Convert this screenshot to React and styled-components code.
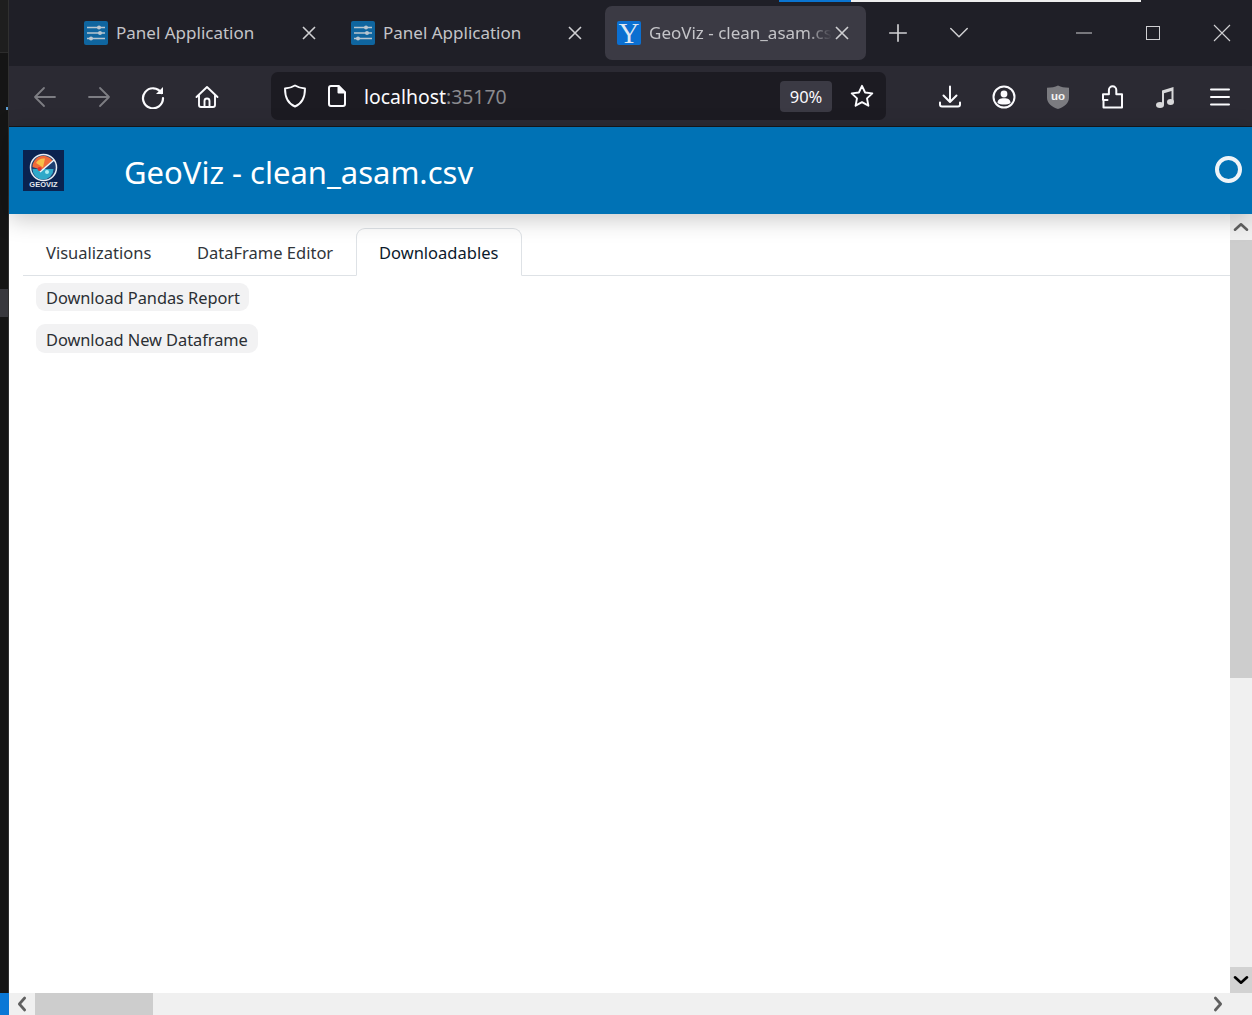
import React from 'react';
import styled, { createGlobalStyle } from 'styled-components';

const GlobalStyle = createGlobalStyle`
  html, body {
    margin: 0;
    padding: 0;
    height: 100%;
    overflow: hidden;
    background: #fff;
  }
  #root {
    height: 100%;
  }
`;

const uiFont = `"Noto Sans", "Open Sans", "Liberation Sans", sans-serif`;

const Page = styled.div`
  display: flex;
  width: 1252px;
  height: 1015px;
  font-family: ${uiFont};
  overflow: hidden;
`;

const LeftStrip = styled.div`
  width: 9px;
  flex: none;
  box-sizing: border-box;
  border-right: 1px solid #303030;
  display: flex;
  flex-direction: column;
  background: #151515;
`;

const StripHead = styled.div`
  height: 53px;
  flex: none;
  box-sizing: border-box;
  background: #1e1e1e;
  border-bottom: 1px solid #2c2c2c;
`;

const StripSpeck = styled.div`
  width: 2px;
  height: 3px;
  flex: none;
  margin: 54px 0 179px 6px;
  background: #5b9bd0;
`;

const StripMiddle = styled.div`
  height: 28px;
  flex: none;
  background: #38383d;
`;

const StripFill = styled.div`
  flex: 1;
`;

const StripBadge = styled.div`
  height: 22px;
  flex: none;
  margin-right: -1px;
  background: #0a78d6;
`;

const Main = styled.div`
  flex: 1;
  min-width: 0;
  display: flex;
  flex-direction: column;
`;

const TabBar = styled.div`
  height: 66px;
  flex: none;
  background: #1f1f27;
  display: flex;
  flex-direction: column;
`;

const LoadStrip = styled.div`
  height: 2px;
  margin-left: 770px;
  display: flex;
`;

const LoadDone = styled.div`
  width: 72px;
  background: #0a74d0;
`;

const LoadRest = styled.div`
  width: 290px;
  background: #eeeeee;
`;

const TabRow = styled.div`
  display: flex;
  padding: 4px 0 0 63px;
`;

const Tab = styled.div`
  width: ${p => p.$width}px;
  height: 54px;
  box-sizing: border-box;
  padding-left: 12px;
  display: flex;
  align-items: center;
  border-radius: 7px;
  background: ${p => (p.$active ? '#3b3a44' : 'transparent')};
`;

const TabTitle = styled.span`
  width: ${p => p.$width}px;
  margin: -2px 0 0 8px;
  font-size: 17px;
  color: #c4c4c8;
  white-space: nowrap;
  overflow: hidden;
  ${p => p.$fade && `mask-image: linear-gradient(to right, #000 86%, transparent 100%);`}
`;

const TabClose = styled.div`
  width: 20px;
  height: 20px;
  margin-left: ${p => p.$gap}px;
  color: #cfcfd2;
`;

const TabFavicon = styled.div`
  width: 24px;
  height: 24px;
  flex: none;
  border-radius: 2px;
  background: #0f659f;
  display: flex;
  align-items: center;
  justify-content: center;
`;

const YFavicon = styled(TabFavicon)`
  background: #0b6fd1;
  color: #dfe7f2;
  font-family: "Liberation Serif", serif;
  font-size: 29px;
  line-height: 24px;
`;

const WindowControls = styled.div`
  display: flex;
  align-items: center;
  height: 54px;
  color: #d0d0d3;
`;

const WindowButton = styled.div`
  width: ${p => p.$width}px;
  margin-left: ${p => p.$gap || 0}px;
  display: flex;
  justify-content: center;
`;

const NavBar = styled.div`
  height: 60px;
  flex: none;
  background: #2b2a33;
  border-bottom: 1px solid #17171b;
  display: flex;
  align-items: center;
  padding-left: 9px;
  color: #fbfbfe;
`;

const NavButton = styled.div`
  width: 54px;
  height: 48px;
  flex: none;
  display: flex;
  align-items: center;
  justify-content: center;
  padding-top: 1px;
  box-sizing: border-box;
  color: ${p => (p.$dim ? '#7d7d83' : 'inherit')};
`;

const UrlBar = styled.div`
  width: 615px;
  height: 48px;
  flex: none;
  margin: 0 37px;
  box-sizing: border-box;
  padding: 0 12px 0 10px;
  border-radius: 7px;
  background: #1c1b22;
  display: flex;
  align-items: center;
`;

const UrlIcon = styled.div`
  width: 28px;
  display: flex;
  justify-content: center;
  margin-right: ${p => p.$gap}px;
`;

const UrlText = styled.div`
  flex: 1;
  font-size: 19.4px;
  color: #fbfbfe;
  white-space: nowrap;
`;

const UrlPort = styled.span`
  color: #8a8a8f;
`;

const ZoomBadge = styled.div`
  width: 52px;
  height: 31px;
  border-radius: 4px;
  background: #3b3a44;
  font-size: 16.5px;
  display: flex;
  align-items: center;
  justify-content: center;
  margin-right: 18px;
`;

const Header = styled.header`
  height: 87px;
  flex: none;
  position: relative;
  z-index: 2;
  background: #0072b5;
  box-shadow: 0 5px 22px rgba(0, 0, 0, 0.22);
  display: flex;
  align-items: center;
  padding: 0 10px 0 14px;
`;

const Logo = styled.svg`
  width: 41px;
  height: 41px;
  flex: none;
  margin-top: -1px;
`;

const HeaderTitle = styled.h1`
  flex: 1;
  margin: 3px 0 0 60px;
  font-size: 31px;
  font-weight: 400;
  color: #fff;
  white-space: nowrap;
`;

const BusyRing = styled.div`
  width: 27px;
  height: 27px;
  margin-top: -2px;
  box-sizing: border-box;
  border: 4px solid #eef4f8;
  border-radius: 50%;
`;

const Body = styled.div`
  flex: 1;
  min-height: 0;
  display: flex;
`;

const Content = styled.div`
  flex: 1;
  min-width: 0;
  background: #fff;
  padding: 14px 0 0 14px;
`;

const TabsHeader = styled.div`
  height: 48px;
  box-sizing: border-box;
  display: flex;
  border-bottom: 1px solid #dee2e6;
`;

const TabLink = styled.div`
  height: 48px;
  box-sizing: border-box;
  flex: none;
  width: ${p => p.$width}px;
  padding: 1px 0 0 ${p => (p.$active ? 22 : 23)}px;
  font-size: 16.5px;
  line-height: 48px;
  color: ${p => (p.$active ? '#0b1a2c' : '#30353a')};
  white-space: nowrap;
  ${p => p.$active && `
    background: #fff;
    border: 1px solid #dee2e6;
    border-bottom-color: #fff;
    border-radius: 9px 9px 0 0;
    line-height: 46px;
  `}
`;

const Downloads = styled.div`
  display: flex;
  flex-direction: column;
  align-items: flex-start;
  gap: 13px;
  padding: 7px 0 0 13px;
`;

const DownloadButton = styled.div`
  width: ${p => p.$width}px;
  height: ${p => p.$height}px;
  box-sizing: border-box;
  padding: 1px 0 0 10px;
  border-radius: 9px;
  background: #f2f2f3;
  color: #2b2f33;
  font-size: 16.4px;
  letter-spacing: -0.05px;
  line-height: ${p => p.$height}px;
  white-space: nowrap;
`;

const VScrollbar = styled.div`
  width: 22px;
  flex: none;
  background: #f0f0f0;
  display: flex;
  flex-direction: column;
`;

const ScrollArrow = styled.div`
  width: ${p => p.$size || 22}px;
  height: ${p => (p.$size ? 22 : 26)}px;
  flex: none;
  display: flex;
  align-items: center;
  justify-content: center;
  background: ${p => (p.$hover ? '#d2d2d2' : '#f0f0f0')};
  color: ${p => (p.$hover ? '#000' : '#606060')};
`;

const VThumb = styled.div`
  height: 438px;
  flex: none;
  background: #cdcdcd;
`;

const ScrollGap = styled.div`
  flex: 1;
`;

const ScrollEnd = styled.div`
  width: 23px;
  flex: none;
`;

const HScrollbar = styled.div`
  height: 22px;
  flex: none;
  background: #f0f0f0;
  display: flex;
`;

const HThumb = styled.div`
  width: 118px;
  flex: none;
  background: #cdcdcd;
`;

const Icon = ({ size = 24, sw = 2, children }) => (
  <svg width={size} height={size} viewBox="0 0 24 24" fill="none" stroke="currentColor" strokeWidth={sw} strokeLinecap="round" strokeLinejoin="round">
    {children}
  </svg>
);

const SliderGlyph = () => (
  <svg width="20" height="16" viewBox="0 0 20 16" stroke="#b9c6d0" strokeWidth="1.6" fill="#b9c6d0">
    <path d="M1 2.5h18M1 8h18M1 13.5h18" />
    <circle cx="13" cy="2.5" r="2" stroke="none" />
    <circle cx="14" cy="8" r="2" stroke="none" />
    <circle cx="5" cy="13.5" r="2" stroke="none" />
  </svg>
);

const CloseGlyph = () => (
  <svg width="20" height="20" viewBox="0 0 20 20" stroke="currentColor" strokeWidth="1.6">
    <path d="M4 4l12 12M16 4L4 16" />
  </svg>
);

const GeoVizLogo = () => (
  <Logo viewBox="0 0 41 41">
    <rect width="41" height="41" fill="#0a2350" />
    <circle cx="20.5" cy="17.5" r="13" fill="#1c3f72" stroke="#e8edf2" strokeWidth="1.5" />
    <path d="M9.5 17a11 11 0 0 1 20-6.5L19 20z" fill="#ef6a3a" />
    <path d="M13 13a9 9 0 0 1 9-4.5l-2 9z" fill="#f6c04a" />
    <path d="M9.5 19h21a10.5 10.5 0 0 1-21 0z" fill="#2fa9c9" />
    <path d="M17 22L31 10" stroke="#f2f5f8" strokeWidth="1.6" />
    <circle cx="16.5" cy="19" r="2" fill="#e0302e" />
    <circle cx="24" cy="22" r="2" fill="#a9ecf2" />
    <text x="20.5" y="36.500" textAnchor="middle" fontFamily="Liberation Sans, sans-serif" fontSize="7.500" fontWeight="700" fill="#e6e9ee">GEOVIZ</text>
  </Logo>
);

const UblockIcon = () => (
  <svg width="24" height="24" viewBox="0 0 24 24">
    <path d="M12 0.500c3 1.500 6.500 2.200 11 2.200v10.300c0 5-5 9-11 11-6-2-11-6-11-11V2.700c4.500 0 8-.7 11-2.200z" fill="#7b7b80" />
    <text x="12" y="15" textAnchor="middle" fontFamily="Liberation Sans, sans-serif" fontSize="11.500" fontWeight="700" fill="#f2f2f2">uo</text>
  </svg>
);

export default function App() {
  return (
    <>
      <GlobalStyle />
      <Page>
        <LeftStrip>
          <StripHead />
          <StripSpeck />
          <StripMiddle />
          <StripFill />
          <StripBadge />
        </LeftStrip>
        <Main>
          <TabBar>
            <LoadStrip>
              <LoadDone />
              <LoadRest />
            </LoadStrip>
            <TabRow>
              <Tab $width={267}>
                <TabFavicon><SliderGlyph /></TabFavicon>
                <TabTitle $width={166}>Panel Application</TabTitle>
                <TabClose $gap={17}><CloseGlyph /></TabClose>
              </Tab>
              <Tab $width={266}>
                <TabFavicon><SliderGlyph /></TabFavicon>
                <TabTitle $width={165}>Panel Application</TabTitle>
                <TabClose $gap={17}><CloseGlyph /></TabClose>
              </Tab>
              <Tab $active $width={261}>
                <YFavicon>Y</YFavicon>
                <TabTitle $fade $width={183}>GeoViz - clean_asam.csv</TabTitle>
                <TabClose $gap={0}><CloseGlyph /></TabClose>
              </Tab>
              <WindowControls>
                <WindowButton $width={24} $gap={20}>
                  <Icon size={22} sw={1.8}><path d="M12 3v18M3 12h18" /></Icon>
                </WindowButton>
                <WindowButton $width={24} $gap={37}>
                  <Icon size={22} sw={1.6}><path d="M3 7l9 9 9-9" /></Icon>
                </WindowButton>
                <WindowButton $width={24} $gap={101}>
                  <svg width="16" height="16" viewBox="0 0 16 16" stroke="currentColor"><path d="M0 8h16" /></svg>
                </WindowButton>
                <WindowButton $width={24} $gap={45}>
                  <svg width="14" height="14" viewBox="0 0 14 14" fill="none" stroke="currentColor"><rect x="0.500" y="0.500" width="13" height="13" /></svg>
                </WindowButton>
                <WindowButton $width={24} $gap={45}>
                  <svg width="18" height="18" viewBox="0 0 18 18" stroke="currentColor" strokeWidth="1.100"><path d="M1 1l16 16M17 1L1 17" /></svg>
                </WindowButton>
              </WindowControls>
            </TabRow>
          </TabBar>

          <NavBar>
            <NavButton $dim><Icon sw={1.8}><path d="M2 12h20M11 3l-9 9 9 9" /></Icon></NavButton>
            <NavButton $dim><Icon sw={1.8}><path d="M2 12h20M13 3l9 9-9 9" /></Icon></NavButton>
            <NavButton>
              <Icon sw={2.2}>
                <path d="M20.500 8A10 10 0 1 0 22 13" />
                <path d="M22 2v7h-7z" fill="currentColor" stroke="none" />
              </Icon>
            </NavButton>
            <NavButton>
              <Icon sw={1.9}>
                <path d="M1.500 12L12 2l10.500 10M4 10v10a2 2 0 0 0 2 2h12a2 2 0 0 0 2-2V10" />
                <path d="M9.500 22v-6a2.500 2.500 0 0 1 5 0v6" />
              </Icon>
            </NavButton>
            <UrlBar>
              <UrlIcon $gap={14}>
                <Icon sw={1.9}><path d="M12 1.500c3 1.800 6 2.700 10 3 0 9-2.500 15-10 18-7.500-3-10-9-10-18 4-.3 7-1.200 10-3z" /></Icon>
              </UrlIcon>
              <UrlIcon $gap={13}>
                <Icon sw={2}><path d="M13.500 2H6a2 2 0 0 0-2 2v16a2 2 0 0 0 2 2h12a2 2 0 0 0 2-2V8.500z" /><path d="M13.500 2v6.500H20z" fill="currentColor" /></Icon>
              </UrlIcon>
              <UrlText>localhost<UrlPort>:35170</UrlPort></UrlText>
              <ZoomBadge>90%</ZoomBadge>
              <Icon sw={1.9}><path d="M12 1.800l3.100 6.700 7.200.9-5.300 5 1.400 7.300-6.400-3.600-6.400 3.600 1.400-7.300-5.300-5 7.200-.9z" /></Icon>
            </UrlBar>
            <NavButton>
              <Icon sw={2}><path d="M12 1.500v15M5.500 10.500l6.500 6.500 6.500-6.500M2 17.500v2a2 2 0 0 0 2 2h16a2 2 0 0 0 2-2v-2" /></Icon>
            </NavButton>
            <NavButton>
              <Icon sw={2}>
                <circle cx="12" cy="12" r="10.500" />
                <circle cx="12" cy="9" r="3.400" fill="currentColor" stroke="none" />
                <path d="M5.500 18c0-3.500 2.500-4.800 6.500-4.800s6.500 1.300 6.500 4.800c-3 2-10 2-13 0z" fill="currentColor" stroke="none" />
              </Icon>
            </NavButton>
            <NavButton><UblockIcon /></NavButton>
            <NavButton>
              <Icon sw={2}><path d="M3.500 15.500v7h18.500V9.300h-5.700V5a3.700 3.700 0 0 0-7.400 0v4.300H3v5.700h4.500" /></Icon>
            </NavButton>
            <NavButton>
              <svg width="24" height="24" viewBox="0 0 24 24" fill="#d8d8da">
                <path d="M8 5.500L19.500 2v15h-2V6L10 8.300V20H8z" />
                <ellipse cx="6" cy="20" rx="4" ry="3" />
                <ellipse cx="16.500" cy="17" rx="3.500" ry="3" />
              </svg>
            </NavButton>
            <NavButton>
              <Icon sw={2}><path d="M3 4.500h18M3 12h18M3 19.500h18" /></Icon>
            </NavButton>
          </NavBar>

          <Header>
            <GeoVizLogo />
            <HeaderTitle>GeoViz - clean_asam.csv</HeaderTitle>
            <BusyRing />
          </Header>

          <Body>
            <Content>
              <TabsHeader>
                <TabLink $width={151}>Visualizations</TabLink>
                <TabLink $width={182}>DataFrame Editor</TabLink>
                <TabLink $active $width={166}>Downloadables</TabLink>
              </TabsHeader>
              <Downloads>
                <DownloadButton $width={213} $height={28}>Download Pandas Report</DownloadButton>
                <DownloadButton $width={222} $height={29}>Download New Dataframe</DownloadButton>
              </Downloads>
            </Content>
            <VScrollbar>
              <ScrollArrow>
                <Icon size={16} sw={4}><path d="M3 16l9-8 9 8" /></Icon>
              </ScrollArrow>
              <VThumb />
              <ScrollGap />
              <ScrollArrow $hover>
                <Icon size={16} sw={4}><path d="M3 8l9 8 9-8" /></Icon>
              </ScrollArrow>
            </VScrollbar>
          </Body>

          <HScrollbar>
            <ScrollArrow $size={26}>
              <Icon size={16} sw={4}><path d="M16 3l-8 9 8 9" /></Icon>
            </ScrollArrow>
            <HThumb />
            <ScrollGap />
            <ScrollArrow $size={22}>
              <Icon size={16} sw={4}><path d="M8 3l8 9-8 9" /></Icon>
            </ScrollArrow>
            <ScrollEnd />
          </HScrollbar>
        </Main>
      </Page>
    </>
  );
}
